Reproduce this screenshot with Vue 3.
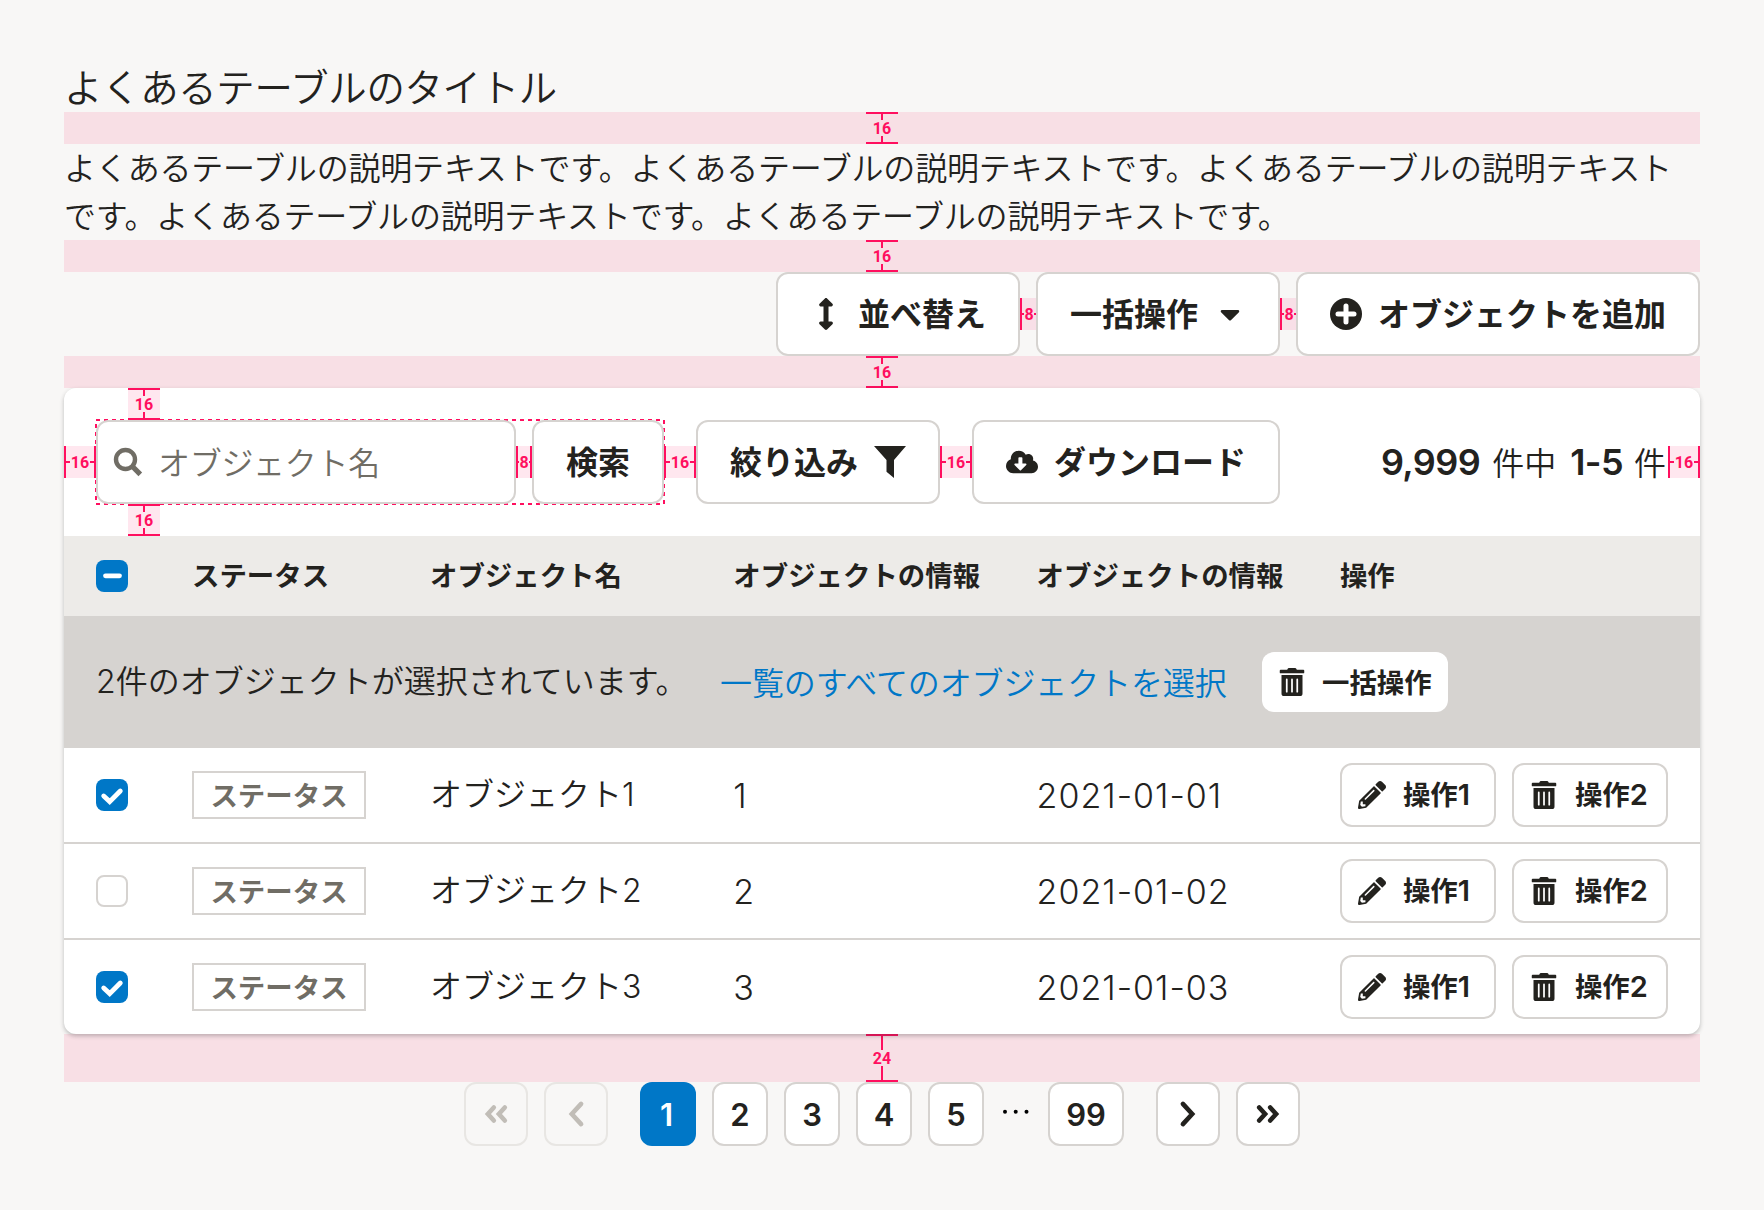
<script setup>
const columns = ['ステータス', 'オブジェクト名', 'オブジェクトの情報', 'オブジェクトの情報', '操作']
const rows = [
  { id: 1, checked: true, date: '2021-01-01' },
  { id: 2, checked: false, date: '2021-01-02' },
  { id: 3, checked: true, date: '2021-01-03' },
]
const pages = [1, 2, 3, 4, 5]
const trashPath =
  'M32 464a48 48 0 0 0 48 48h288a48 48 0 0 0 48-48V128H32zm272-256a16 16 0 0 1 32 0v224a16 16 0 0 1-32 0zm-96 0a16 16 0 0 1 32 0v224a16 16 0 0 1-32 0zm-96 0a16 16 0 0 1 32 0v224a16 16 0 0 1-32 0zM432 32H312l-9.4-18.7A24 24 0 0 0 281.1 0H166.8a23.72 23.72 0 0 0-21.4 13.3L136 32H16A16 16 0 0 0 0 48v32a16 16 0 0 0 16 16h416a16 16 0 0 0 16-16V48a16 16 0 0 0-16-16z'
const pencilPath =
  'M497.9 142.1l-46.1 46.1c-4.7 4.7-12.3 4.7-17 0l-111-111c-4.7-4.7-4.7-12.3 0-17l46.1-46.1c18.7-18.7 49.1-18.7 67.9 0l60.1 60.1c18.8 18.7 18.8 49.1 0 67.9zM284.2 99.8L21.6 362.4.4 483.9c-2.9 16.4 11.4 30.6 27.8 27.8l121.5-21.3 262.6-262.6c4.7-4.7 4.7-12.3 0-17l-111-111c-4.8-4.7-12.4-4.7-17.1 0zM124.1 339.9c-5.5-5.5-5.5-14.3 0-19.8l154-154c5.5-5.5 14.3-5.5 19.8 0s5.5 14.3 0 19.8l-154 154c-5.5 5.5-14.3 5.5-19.8 0zM88 424h48v36.3l-64.5 11.3-31.1-31.1L51.7 376H88v48z'
</script>

<template>
  <main class="page">
    <h1 class="title">よくあるテーブルのタイトル</h1>
    <div class="band"><span class="mark vertical"><b>16</b></span></div>
    <p class="description">
      よくあるテーブルの説明テキストです。よくあるテーブルの説明テキストです。よくあるテーブルの説明テキスト<br />です。よくあるテーブルの説明テキストです。よくあるテーブルの説明テキストです。
    </p>
    <div class="band"><span class="mark vertical"><b>16</b></span></div>

    <div class="actions">
      <button class="button">
        <svg class="icon" viewBox="-128 0 512 512"><path d="M214.059 377.941H168V134.059h46.059c21.382 0 32.09-25.851 16.971-40.971L144.971 7.029c-9.373-9.373-24.568-9.373-33.941 0L24.971 93.088c-15.119 15.119-4.411 40.971 16.971 40.971H88v243.882H41.941c-21.382 0-32.09 25.851-16.971 40.971l86.059 86.059c9.373 9.373 24.568 9.373 33.941 0l86.059-86.059c15.12-15.119 4.412-40.971-16.97-40.971z" /></svg>
        <span class="label">並べ替え</span>
      </button>
      <span class="mark horizontal tinted open"><b>8</b></span>
      <button class="button">
        <span class="label">一括操作</span>
        <svg class="icon" viewBox="-96 0 512 512"><path d="M31.3 192h257.3c17.8 0 26.7 21.5 14.1 34.1L174.1 354.7c-7.8 7.8-20.5 7.8-28.3 0L17.2 226.1C4.6 213.5 13.5 192 31.3 192z" /></svg>
      </button>
      <span class="mark horizontal tinted open"><b>8</b></span>
      <button class="button">
        <svg class="icon" viewBox="0 0 32 32"><circle cx="16" cy="16" r="16" /><path class="cutout" d="M16 8v16M8 16h16" /></svg>
        <span class="label">オブジェクトを追加</span>
      </button>
    </div>
    <div class="band"><span class="mark vertical"><b>16</b></span></div>

    <section class="card">
      <div class="toolbar">
        <span class="mark horizontal tinted"><b>16</b></span>
        <div class="search">
          <svg class="outline" width="572" height="88"><rect x="2" y="2" width="568" height="84" /></svg>
          <span class="mark vertical tinted above"><b>16</b></span>
          <div class="input">
            <svg class="icon" viewBox="0 0 32 32"><circle class="lens" cx="13.5" cy="13.5" r="9.5" /><path class="handle" d="M20.5 20.5l7.8 7.8" /></svg>
            <span class="placeholder">オブジェクト名</span>
          </div>
          <span class="mark horizontal tinted"><b>8</b></span>
          <button class="button"><span class="label">検索</span></button>
          <span class="mark vertical tinted below"><b>16</b></span>
        </div>
        <span class="mark horizontal tinted"><b>16</b></span>
        <button class="button">
          <span class="label">絞り込み</span>
          <svg class="icon" viewBox="0 0 32 32"><path d="M0 0h32L20 14v18l-7.5-6.3V14z" /></svg>
        </button>
        <span class="mark horizontal tinted"><b>16</b></span>
        <button class="button">
          <svg class="icon" viewBox="0 -64 640 640"><path d="M537.6 226.6c4.1-10.7 6.4-22.4 6.4-34.6 0-53-43-96-96-96-19.7 0-38.1 6-53.3 16.2C367 64.2 315.3 32 256 32c-88.4 0-160 71.6-160 160 0 2.7.1 5.4.2 8.1C40.2 219.8 0 273.2 0 336c0 79.5 64.5 144 144 144h368c70.7 0 128-57.3 128-128 0-61.9-44-113.6-102.4-125.4zm-132.9 88.7L299.3 420.7c-6.2 6.2-16.4 6.2-22.6 0L171.3 315.3c-10.1-10.1-2.9-27.3 11.3-27.3H248V176c0-8.8 7.2-16 16-16h48c8.8 0 16 7.2 16 16v112h65.4c14.2 0 21.4 17.2 11.3 27.3z" /></svg>
          <span class="label">ダウンロード</span>
        </button>
        <div class="count"><strong class="total">9,999</strong><span class="unit">件中</span><strong class="range">1-5</strong><span class="unit">件</span></div>
        <span class="mark horizontal tinted"><b>16</b></span>
      </div>

      <div class="grid head">
        <span class="check on"><svg viewBox="0 0 32 32"><path d="M9.5 15.8h14" /></svg></span>
        <span v-for="(c, i) in columns" :key="i" class="label">{{ c }}</span>
      </div>

      <div class="bulk">
        <span class="selected"><span class="num">2</span>件のオブジェクトが選択されています。</span>
        <a class="link">一覧のすべてのオブジェクトを選択</a>
        <button class="button small plain">
          <svg class="icon" viewBox="-32 0 512 512"><path :d="trashPath" /></svg>
          <span class="label">一括操作</span>
        </button>
      </div>

      <div v-for="r in rows" :key="r.id" class="grid row">
        <span class="check" :class="{ on: r.checked }">
          <svg v-if="r.checked" viewBox="0 0 32 32"><path d="M7.7 17l6 5.6L24.3 12" /></svg>
        </span>
        <span><span class="status">ステータス</span></span>
        <span class="name">オブジェクト<span class="num">{{ r.id }}</span></span>
        <span class="value">{{ r.id }}</span>
        <span class="value">{{ r.date }}</span>
        <span class="ops">
          <button class="button small">
            <svg class="icon" viewBox="0 0 512 512"><path :d="pencilPath" /></svg>
            <span class="label">操作<span class="num">1</span></span>
          </button>
          <button class="button small">
            <svg class="icon" viewBox="-32 0 512 512"><path :d="trashPath" /></svg>
            <span class="label">操作<span class="num">2</span></span>
          </button>
        </span>
      </div>
    </section>

    <div class="band tall"><span class="mark vertical"><b>24</b></span></div>

    <nav class="pagination">
      <button class="pager arrow disabled"><svg viewBox="0 0 64 64"><path d="M29.8 25.5L23.9 32l5.9 6.5M40.8 25.5L34.9 32l5.9 6.5" /></svg></button>
      <button class="pager arrow disabled"><svg viewBox="0 0 64 64"><path d="M37.1 21.9L27.8 32l9.3 10.1" /></svg></button>
      <button v-for="p in pages" :key="p" class="pager" :class="{ current: p === 1 }">{{ p }}</button>
      <svg class="dots" viewBox="0 0 32 64"><circle cx="5" cy="29.7" r="2" /><circle cx="15.7" cy="29.7" r="2" /><circle cx="26.5" cy="29.7" r="2" /></svg>
      <button class="pager last">99</button>
      <button class="pager arrow next"><svg viewBox="0 0 64 64"><path d="M26.9 21.9L36.2 32l-9.3 10.1" /></svg></button>
      <button class="pager arrow"><svg viewBox="0 0 64 64"><path d="M34.2 25.5l5.9 6.5-5.9 6.5M23.2 25.5l5.9 6.5-5.9 6.5" /></svg></button>
    </nav>
  </main>
</template>

<style>
body {
  background: #f8f7f6;
}
</style>

<style scoped>
* {
  box-sizing: border-box;
}
.page {
  width: 1764px;
  height: 1210px;
  padding: 64px 64px 0;
  overflow: hidden;
  background: #f8f7f6;
  color: #23221e;
  font-family: 'Noto Sans CJK JP', sans-serif;
  font-size: 32px;
  font-weight: 350;
  line-height: 48px;
  white-space: nowrap;
}
.title {
  margin: 0;
  height: 48px;
  font-size: 38.4px;
  font-weight: 350;
  line-height: 42px;
  letter-spacing: -0.3px;
}
.description {
  margin: -2px 0 2px;
  height: 96px;
  letter-spacing: -0.18px;
}
.band {
  display: flex;
  justify-content: center;
  height: 32px;
  background: #f8dfe5;
}
.band.tall {
  height: 48px;
}

/* Spacing annotations */
.mark {
  display: flex;
  flex: none;
  align-items: center;
  color: #ff0f5f;
  font-family: Roboto, sans-serif;
  font-size: 16px;
  line-height: 16px;
}
.mark b {
  height: 16px;
  font-weight: 700;
  line-height: 18px;
}
.mark::before,
.mark::after {
  content: '';
  flex: 1;
  background: #ff0f5f;
}
.mark.tinted {
  background: rgba(255, 15, 95, 0.1);
}
.vertical {
  flex-direction: column;
  width: 32px;
  height: 100%;
  border: solid #ff0f5f;
  border-width: 2px 0;
}
.vertical::before,
.vertical::after {
  width: 2px;
}
.horizontal {
  height: 32px;
  width: 32px;
  border: solid #ff0f5f;
  border-width: 0 2px;
}
.horizontal b {
  padding: 0 1px;
}
.horizontal::before,
.horizontal::after {
  height: 2px;
}
.actions .horizontal,
.search .horizontal {
  width: 16px;
}
.actions .horizontal b,
.search .horizontal b {
  padding: 0;
}
.horizontal.open {
  border-right: 0;
}

.button {
  display: flex;
  align-items: center;
  justify-content: center;
  gap: 16px;
  height: 84px;
  padding: 0 32px;
  border: 2px solid #d6d3d0;
  border-radius: 12px;
  background: #fff;
  color: #23221e;
  font-family: inherit;
  font-size: 32px;
  font-weight: 700;
  line-height: 48px;
  flex: none;
}
.label {
  padding-bottom: 4px;
}
.button.small {
  justify-content: flex-start;
  gap: 17px;
  width: 156px;
  height: 64px;
  padding: 0 0 0 16px;
  font-size: 27.43px;
}
.button.small .label {
  padding-bottom: 3px;
}
.button.small .icon {
  width: 28px;
  height: 28px;
}
.button.small .num {
  font-size: 29px;
  font-weight: 600;
}
.button.small.plain {
  gap: 16px;
  width: 186px;
  height: 60px;
  border: 0;
}
.icon {
  flex: none;
  width: 32px;
  height: 32px;
  fill: currentColor;
}
.cutout {
  fill: none;
  stroke: #fff;
  stroke-width: 5;
  stroke-linecap: round;
}
.actions {
  display: flex;
  align-items: center;
  justify-content: flex-end;
  height: 84px;
}

.card {
  position: relative;
  height: 646px;
  border-radius: 12px;
  background: #fff;
  box-shadow: 0 2px 4px rgba(51, 51, 51, 0.3);
}
.toolbar {
  display: flex;
  align-items: center;
  height: 148px;
}
.search {
  position: relative;
  display: flex;
  align-items: center;
}
.outline {
  position: absolute;
  left: -2px;
  top: -2px;
}
.outline rect {
  fill: none;
  stroke: #ff0f5f;
  stroke-width: 2;
  stroke-dasharray: 4 4;
}
.search .button,
.input {
  position: relative;
}
.above,
.below {
  position: absolute;
  left: 32px;
  height: 32px;
}
.above {
  top: -32px;
}
.below {
  bottom: -32px;
}
.input {
  display: flex;
  align-items: center;
  gap: 14px;
  width: 420px;
  height: 84px;
  padding-left: 14px;
  border: 2px solid #d6d3d0;
  border-radius: 12px;
  background: #fff;
  color: #706d65;
}
.placeholder {
  padding-bottom: 2px;
  letter-spacing: -0.3px;
}
.lens,
.handle {
  fill: none;
  stroke: currentColor;
  stroke-width: 4.4;
}
.handle {
  stroke-width: 5.2;
}
.count {
  display: flex;
  align-items: center;
  margin-left: auto;
  padding-right: 2px;
}
.count strong {
  font-family: Inter, sans-serif;
  font-size: 36px;
  font-weight: 600;
  letter-spacing: -0.6px;
}
.unit {
  padding-bottom: 2px;
}
.total {
  margin-right: 12px;
}
.range {
  margin: 0 11px 0 14px;
}

.grid {
  display: grid;
  grid-template-columns: 96px 238px 303.3px 303.3px 303.3px 1fr;
  align-items: center;
  padding-left: 32px;
}
.head {
  height: 80px;
  background: #edebe8;
  font-size: 27.43px;
  font-weight: 700;
}
.row {
  height: 96px;
  border-bottom: 2px solid #d6d3d0;
}
.row:last-child {
  height: 94px;
  border-bottom: 0;
}
.check {
  display: block;
  width: 32px;
  height: 32px;
  border: 2px solid #d6d3d0;
  border-radius: 8px;
  background: #fff;
}
.check.on {
  border: 0;
  background: #0077c7;
}
.check svg {
  display: block;
  fill: none;
  stroke: #fff;
  stroke-width: 4.8;
  stroke-linecap: round;
}
.bulk {
  display: flex;
  align-items: center;
  height: 132px;
  padding-left: 32px;
  background: #d6d3d0;
}
.selected {
  width: 624px;
  padding-bottom: 3px;
}
.link {
  width: 542px;
  padding-bottom: 3px;
  color: #0077c7;
  letter-spacing: -0.12px;
}
.num,
.value {
  font-family: Inter, sans-serif;
  font-weight: 300;
}
.value {
  padding-top: 1px;
  font-size: 34px;
  letter-spacing: 1px;
}
.name {
  padding-bottom: 3px;
}
.status {
  display: flex;
  align-items: center;
  justify-content: center;
  width: 174px;
  height: 48px;
  padding-bottom: 3px;
  border: 2px solid #d6d3d0;
  color: #706d65;
  font-size: 27.43px;
  font-weight: 700;
}
.ops {
  display: flex;
  gap: 16px;
}

.pagination {
  display: flex;
  justify-content: center;
  gap: 16px;
  height: 64px;
}
.pager {
  display: flex;
  align-items: center;
  justify-content: center;
  width: 56px;
  padding: 0;
  border: 2px solid #d6d3d0;
  border-radius: 12px;
  background: #fff;
  color: #23221e;
  font-family: Inter, sans-serif;
  font-size: 31px;
  font-weight: 600;
}
.pager.arrow {
  width: 64px;
}
.pager svg {
  flex: none;
  width: 64px;
  height: 64px;
  fill: none;
  stroke: currentColor;
  stroke-width: 4.6;
  stroke-linecap: round;
}
.pager.disabled {
  border-color: #e8e6e3;
  background: transparent;
  color: #c1bdb7;
}
.pager.disabled + .pager:not(.disabled) {
  margin-left: 16px;
}
.pager.current {
  padding-right: 3px;
  border: 0;
  background: #0077c7;
  color: #fff;
}
.pager.last {
  width: 76px;
}
.pager.next {
  margin-left: 16px;
}
.dots {
  width: 32px;
  height: 64px;
}
</style>
